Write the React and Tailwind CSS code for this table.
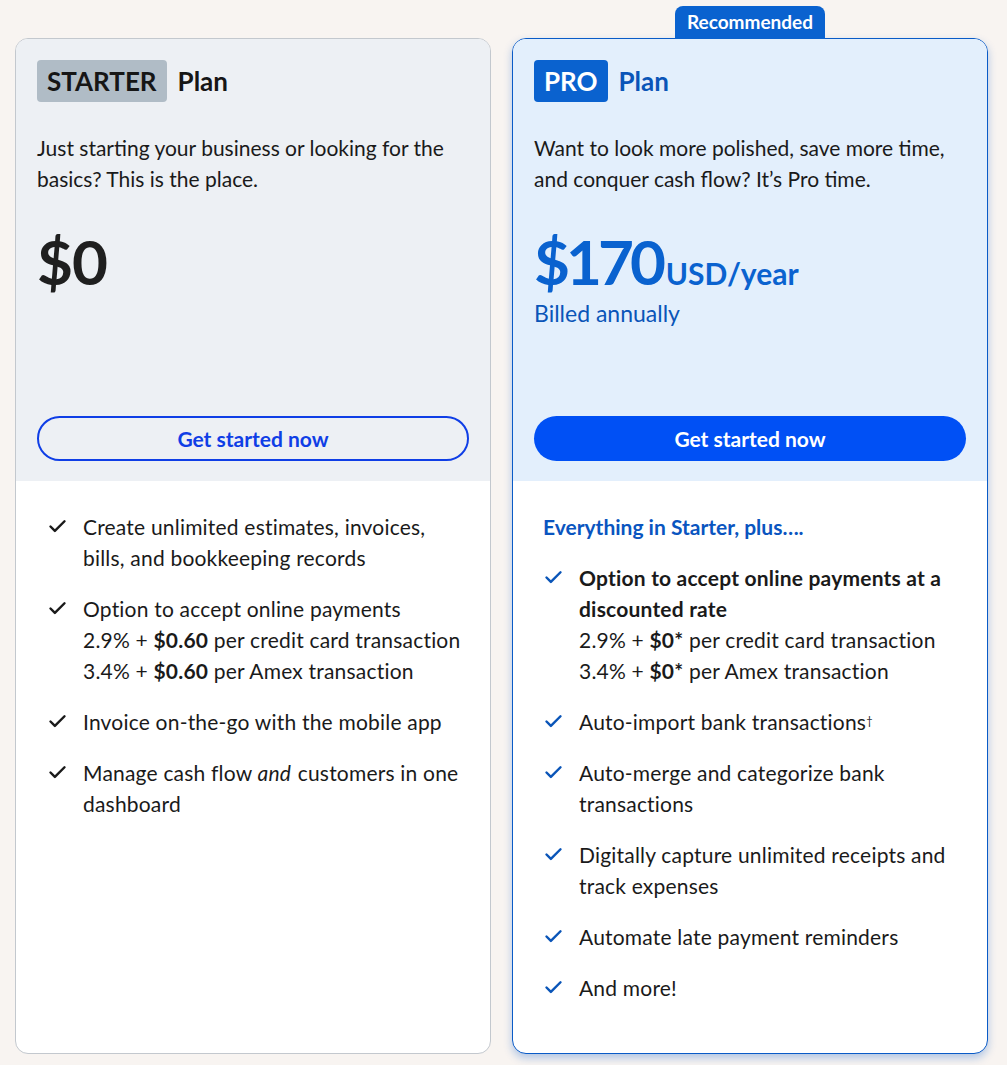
import { Check } from "lucide-react";

const starterFeatures = [
  <>Create unlimited estimates, invoices, bills, and bookkeeping records</>,
  <>
    Option to accept online payments
    <br />
    2.9% + <b>$0.60</b> per credit card transaction
    <br />
    3.4% + <b>$0.60</b> per Amex transaction
  </>,
  <>Invoice on-the-go with the mobile app</>,
  <>
    Manage cash flow <em className="pr-[1px]">and</em> customers in one dashboard
  </>,
];

const proFeatures = [
  <>
    <b>Option to accept online payments at a discounted rate</b>
    <br />
    2.9% + <b>$0*</b> per credit card transaction
    <br />
    3.4% + <b>$0*</b> per Amex transaction
  </>,
  <>
    Auto-import bank transactions<sup className="text-[11px]">†</sup>
  </>,
  <>Auto-merge and categorize bank transactions</>,
  <>Digitally capture unlimited receipts and track expenses</>,
  <>Automate late payment reminders</>,
  <>And more!</>,
];

function FeatureList({ items, checkClass }) {
  return (
    <ul className="flex flex-col gap-5">
      {items.map((item, i) => (
        <li key={i} className="flex items-start">
          <Check
            className={`mt-[5px] w-[21px] h-[21px] shrink-0 ${checkClass}`}
            strokeWidth={2.8}
          />
          <div className="ml-[15px] text-[21px] leading-[31px] tracking-[0.2px] text-[#1a1a1a]">{item}</div>
        </li>
      ))}
    </ul>
  );
}

export default function App() {
  return (
    <div className="min-h-screen bg-[#f8f4f1] font-['Lato',sans-serif]">
      <div className="grid grid-cols-[476px_476px] gap-[21px] pl-[15px] pt-[38px] pb-3">
        {/* Starter */}
        <div className="h-[1016px] rounded-[13px] border border-[#c3c8ce] bg-white overflow-hidden flex flex-col">
          <div className="h-[442px] bg-[#edf0f4] px-[21px] pt-[21px] pb-5 flex flex-col">
            <div className="flex items-center gap-[11px]">
              <span className="h-[42px] px-[10px] rounded-[4px] bg-[#b0bcc6] text-[26px] font-bold text-[#161616] flex items-center">
                STARTER
              </span>
              <span className="text-[26px] font-bold text-[#161616]">Plan</span>
            </div>
            <p className="mt-[30px] text-[21px] leading-[31px] text-[#1a1a1a]">
              Just starting your business or looking for the basics? This is the place.
            </p>
            <div className="mt-[31px] text-[62px] leading-[72px] font-bold text-[#1f1f1f] tracking-[-1px]">
              $0
            </div>
            <button className="mt-auto h-[45px] w-full rounded-full border-2 border-[#0f3ee6] text-[#0f3ee6] text-[21px] font-bold">
              Get started now
            </button>
          </div>
          <div className="pl-[31px] pr-5 pt-[30px]">
            <FeatureList items={starterFeatures} checkClass="text-[#1a1a1a]" />
          </div>
        </div>

        {/* Pro */}
        <div className="relative">
          <div className="absolute left-[163px] -top-[32px] h-[33px] w-[150px] rounded-t-[8px] bg-[#0a62cf] text-white text-[19px] font-bold flex items-center justify-center">
            Recommended
          </div>
          <div className="h-[1016px] rounded-[14px] border-[1.5px] border-[#0a5bc7] bg-white overflow-hidden flex flex-col shadow-[0_4px_8px_rgba(10,91,199,0.3)]">
            <div className="h-[442px] bg-[#e3effc] px-[21px] pt-[21px] pb-5 flex flex-col">
              <div className="flex items-center gap-[11px]">
                <span className="h-[42px] px-[10px] rounded-[4px] bg-[#0a62cf] text-[26px] font-bold text-white flex items-center">
                  PRO
                </span>
                <span className="text-[26px] font-bold text-[#0a55b8]">Plan</span>
              </div>
              <p className="mt-[30px] text-[21px] leading-[31px] text-[#1a1a1a]">
                Want to look more polished, save more time, and conquer cash flow? It’s Pro time.
              </p>
              <div className="mt-[31px] flex items-baseline text-[#0a62cf]">
                <span className="text-[62px] leading-[72px] font-bold tracking-[-4px]">$170</span>
                <span className="ml-1 text-[30px] font-bold">USD/year</span>
              </div>
              <div className="mt-[1px] text-[23px] leading-[30px] text-[#0a55b8]">Billed annually</div>
              <button className="mt-auto h-[45px] w-full rounded-full bg-[#0050f5] text-white text-[21px] font-bold">
                Get started now
              </button>
            </div>
            <div className="pl-[30px] pr-5 pt-[30px]">
              <div className="text-[21px] leading-[31px] font-bold text-[#0a55c0] mb-5">
                Everything in Starter, plus….
              </div>
              <FeatureList items={proFeatures} checkClass="text-[#0a55b8]" />
            </div>
          </div>
        </div>
      </div>
    </div>
  );
}
